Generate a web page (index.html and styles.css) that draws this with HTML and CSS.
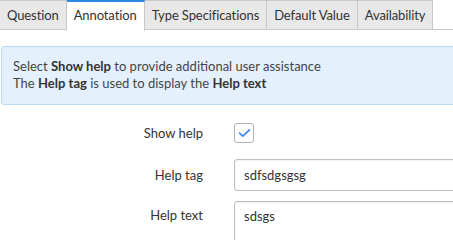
FILE: index.html
```html
<!DOCTYPE html>
<html lang="en">
<head>
    <meta charset="UTF-8">
    <title>Annotation</title>
    <link rel="stylesheet" href="styles.css">
</head>
<body>
    <div class="page">
        <ul class="tabs">
            <li class="tab">Question</li>
            <li class="tab active">Annotation</li>
            <li class="tab">Type Specifications</li>
            <li class="tab">Default Value</li>
            <li class="tab">Availability</li>
        </ul>

        <div class="info-box">
            Select <b>Show help</b> to provide additional user assistance<br>
            The <b>Help tag</b> is used to display the <b>Help text</b>
        </div>

        <div class="form">
            <div class="form-row row-check">
                <label class="form-label">Show help</label>
                <span class="checkbox">
                    <svg width="13" height="10" viewBox="0 0 13 10">
                        <path d="M1.5 5.2 L4.8 8.2 L11.5 1.8" fill="none" stroke="#3b7ff0" stroke-width="1.6" stroke-linecap="round" stroke-linejoin="round"/>
                    </svg>
                </span>
            </div>
            <div class="form-row row-input">
                <label class="form-label">Help tag</label>
                <input class="text-input" type="text" value="sdfsdgsgsg">
            </div>
            <div class="form-row row-area">
                <label class="form-label">Help text</label>
                <textarea class="text-area" rows="3">sdsgs</textarea>
            </div>
        </div>
    </div>
</body>
</html>
```

FILE: styles.css
```css
body {
    margin: 0;
    font-family: Lato, "Open Sans", sans-serif;
    font-size: 13px;
    color: #333;
    background: #fff;
    overflow: hidden;
}
.page {
    width: 620px;
}
.tabs {
    list-style: none;
    margin: 0;
    padding: 0;
    display: flex;
    height: 29px;
    border-bottom: 1px solid #c8c8c8;
    width: 453px;
}
.tab {
    padding: 0 7px;
    line-height: 28px;
    background: #e8e8e8;
    border-top: 1px solid #c8c8c8;
    border-right: 1px solid #c8c8c8;
    color: #333;
    letter-spacing: -0.1px;
}
.tab.active {
    background: #fff;
    border-top: 2px solid #2a8ae6;
    line-height: 27px;
    height: 28px;
    margin-bottom: -1px;
    padding-bottom: 1px;
}
.info-box {
    margin: 16px 0 0 1px;
    padding: 11px 11px 12px;
    line-height: 17px;
    background: #e4f1fd;
    border: 1px solid #b9d9f6;
    border-radius: 3px;
    color: #444;
}
.info-box b {
    font-weight: 700;
    color: #333;
}
.form {
    padding-top: 18px;
}
.form-row {
    display: grid;
    grid-template-columns: 203px 1fr;
    column-gap: 31px;
    align-items: center;
}
.form-label {
    text-align: right;
    color: #333;
}
.row-input {
    margin-top: 16px;
}
.row-area {
    margin-top: 10px;
    align-items: start;
}
.row-area .form-label {
    padding-top: 6px;
}
.checkbox {
    width: 18px;
    height: 18px;
    border: 1px solid #b4b4b4;
    border-radius: 3px;
    display: flex;
    align-items: center;
    justify-content: center;
    background: #fff;
}
.text-input,
.text-area {
    font-family: inherit;
    font-size: 13px;
    color: #333;
    border: 1px solid #bdbdbd;
    border-radius: 3px;
    box-shadow: inset 0 1px 2px rgba(0, 0, 0, 0.06);
    padding: 0 9px;
    margin: 0;
    box-sizing: border-box;
    width: 360px;
}
.text-input {
    height: 32px;
}
.text-area {
    padding-top: 6px;
    height: 80px;
    resize: none;
    line-height: 17px;
}
```
